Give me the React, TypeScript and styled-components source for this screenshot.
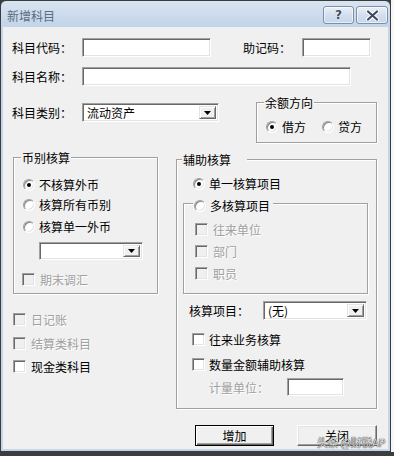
import React from 'react';
import styled, { createGlobalStyle } from 'styled-components';

const GlobalStyle = createGlobalStyle`
  html, body {
    margin: 0;
    padding: 0;
  }
  body {
    background: #3d3d3d;
    font-family: "Noto Sans CJK SC", "Noto Sans", sans-serif;
    overflow: hidden;
  }
`;

const Page = styled.div`
  position: relative;
  display: flex;
  width: 394px;
  height: 456px;
`;

const Window = styled.div`
  width: 391px;
  height: 452px;
  box-sizing: border-box;
  display: flex;
  flex-direction: column;
  padding: 0 2px 2px 2px;
  border: 1px solid #3b3b3b;
  border-radius: 6px 6px 0 0;
  background: linear-gradient(#d9e4f2 0px, #c3d5ea 24px, #c5d6eb 100%);
`;

const SideStrip = styled.div`
  flex: 1;
  height: 452px;
  background: #f6f6f6;
`;

const TitleBar = styled.div`
  height: 26px;
  display: flex;
  justify-content: space-between;
  align-items: flex-start;
  flex-shrink: 0;
`;

const Title = styled.div`
  padding: 8px 0 0 4px;
  font-size: 12px;
  line-height: 14px;
  color: #5c6d83;
`;

const CaptionButtons = styled.div`
  display: flex;
  gap: 2px;
  padding-top: 5px;
`;

const CaptionButton = styled.div<{ $w: number }>`
  width: ${p => p.$w}px;
  height: 18px;
  box-sizing: border-box;
  border: 1px solid #7d8fa6;
  border-radius: 3px;
  background: linear-gradient(#eaf0f8, #d3dfee 50%, #c7d6ea);
  box-shadow: inset 0 0 0 1px rgba(255, 255, 255, 0.6);
  display: flex;
  align-items: center;
  justify-content: center;
  font-family: "DejaVu Sans", sans-serif;
  font-weight: bold;
  font-size: 12px;
  color: #3d4b5e;
  text-shadow: 0 0 1px #fff, 0 0 1px #fff;
`;

const Client = styled.div`
  flex: 1;
  position: relative;
  box-sizing: border-box;
  background: #f0f0f0;
  padding: 11px 0 0 9px;
  display: flex;
  flex-direction: column;
`;

const Row = styled.div<{ $mt?: number; $ml?: number; $align?: string }>`
  display: flex;
  align-items: ${p => p.$align ?? 'center'};
  margin-top: ${p => p.$mt ?? 0}px;
  margin-left: ${p => p.$ml ?? 0}px;
`;

const Column = styled.div<{ $w?: number; $ml?: number; $pt?: number; $pl?: number }>`
  display: flex;
  flex-direction: column;
  align-items: flex-start;
  ${p => (p.$w ? `width: ${p.$w}px;` : '')}
  margin-left: ${p => p.$ml ?? 0}px;
  padding-top: ${p => p.$pt ?? 0}px;
  padding-left: ${p => p.$pl ?? 0}px;
`;

const Label = styled.span<{ $w?: number; $ml?: number; $disabled?: boolean }>`
  ${p => (p.$w ? `width: ${p.$w}px;` : '')}
  margin-left: ${p => p.$ml ?? 0}px;
  flex-shrink: 0;
  font-size: 12px;
  line-height: 13px;
  white-space: nowrap;
  color: ${p => (p.$disabled ? '#a0a0a0' : '#000')};
  ${p => (p.$disabled ? 'text-shadow: 1px 1px 0 #fff;' : '')}
`;

const TextBox = styled.div<{ $w: number; $h?: number; $ml?: number; $mt?: number }>`
  width: ${p => p.$w}px;
  height: ${p => p.$h ?? 19}px;
  margin-left: ${p => p.$ml ?? 0}px;
  margin-top: ${p => p.$mt ?? 0}px;
  box-sizing: border-box;
  flex-shrink: 0;
  background: #fff;
  border: 1px solid;
  border-color: #a0a0a0 #fff #fff #a0a0a0;
  box-shadow: inset 1px 1px 0 #696969, inset -1px -1px 0 #e3e3e3;
`;

const Combo = styled(TextBox)`
  display: flex;
  align-items: center;
  justify-content: space-between;
  padding: 2px;
`;

const ComboText = styled.span`
  padding-left: 2px;
  font-size: 12px;
  line-height: 13px;
  color: #000;
`;

const DropButton = styled.div`
  width: 17px;
  height: 100%;
  box-sizing: border-box;
  background: #f0f0f0;
  border: 1px solid;
  border-color: #e3e3e3 #696969 #696969 #e3e3e3;
  box-shadow: inset 1px 1px 0 #fff, inset -1px -1px 0 #a0a0a0;
  display: flex;
  align-items: center;
  justify-content: center;
`;

const GroupBox = styled.div<{ $w: number; $h: number; $mt?: number; $ml?: number }>`
  position: relative;
  box-sizing: border-box;
  flex-shrink: 0;
  width: ${p => p.$w}px;
  height: ${p => p.$h}px;
  margin-top: ${p => p.$mt ?? 0}px;
  margin-left: ${p => p.$ml ?? 0}px;
  border: 1px solid #a0a0a0;
  box-shadow: 1px 1px 0 #fff, inset 1px 1px 0 #fff;
`;

const Legend = styled.div<{ $left: number; $top?: number; $pr?: number }>`
  position: absolute;
  top: ${p => p.$top ?? -7}px;
  left: ${p => p.$left}px;
  padding: 0 ${p => p.$pr ?? 1}px 0 1px;
  background: #f0f0f0;
  display: flex;
  align-items: center;
  font-size: 12px;
  line-height: 13px;
`;

const Item = styled.div<{ $mt?: number; $ml?: number; $disabled?: boolean }>`
  display: flex;
  align-items: center;
  height: 13px;
  margin-top: ${p => p.$mt ?? 0}px;
  margin-left: ${p => p.$ml ?? 0}px;
  font-size: 12px;
  line-height: 13px;
  white-space: nowrap;
  color: ${p => (p.$disabled ? '#a0a0a0' : '#000')};
  ${p => (p.$disabled ? 'text-shadow: 1px 1px 0 #fff;' : '')}
`;

const RadioDot = styled.span<{ $checked?: boolean }>`
  position: relative;
  width: 12px;
  height: 12px;
  margin-right: 4px;
  box-sizing: border-box;
  border-radius: 50%;
  background: #fff;
  border: 1px solid;
  border-color: #a0a0a0 #fff #fff #a0a0a0;
  box-shadow: inset 1px 1px 0 #8a8a8a, inset -1px -1px 0 #e3e3e3;
  flex-shrink: 0;

  &::after {
    content: '';
    display: ${p => (p.$checked ? 'block' : 'none')};
    position: absolute;
    left: 3px;
    top: 3px;
    width: 4px;
    height: 4px;
    border-radius: 50%;
    background: #000;
  }
`;

const CheckBox = styled.span<{ $disabled?: boolean; $gap?: number }>`
  width: 13px;
  height: 13px;
  margin-right: ${p => p.$gap ?? 5}px;
  box-sizing: border-box;
  flex-shrink: 0;
  background: ${p => (p.$disabled ? '#f0f0f0' : '#fff')};
  border: 1px solid;
  border-color: #a0a0a0 #fff #fff #a0a0a0;
  box-shadow: inset 1px 1px 0 #696969, inset -1px -1px 0 #e3e3e3;
`;

const Button = styled.div<{ $w: number; $ml?: number; $default?: boolean }>`
  width: ${p => p.$w}px;
  height: 21px;
  margin-left: ${p => p.$ml ?? 0}px;
  box-sizing: border-box;
  background: #f0f0f0;
  display: flex;
  align-items: center;
  justify-content: center;
  font-size: 12px;
  color: #000;
  border: 1px solid;
  border-color: ${p => (p.$default ? '#000' : '#fff #696969 #696969 #fff')};
  box-shadow: ${p =>
    p.$default
      ? 'inset 1px 1px 0 #fff, inset -1px -1px 0 #696969, inset -2px -2px 0 #a0a0a0'
      : 'inset -1px -1px 0 #a0a0a0, inset 1px 1px 0 #e3e3e3'};
`;

const Watermark = styled.div`
  position: absolute;
  left: 317px;
  top: 436px;
  font-size: 11px;
  line-height: 13px;
  letter-spacing: -0.3px;
  color: #dcdcdc;
  text-shadow: 0 0 1px #3a3a3a, 0 0 1px #3a3a3a;
  white-space: nowrap;
`;

const Arrow = () => (
  <svg width="7" height="4" viewBox="0 0 7 4">
    <polygon points="0,0 7,0 3.5,4" fill="#000" />
  </svg>
);

const CloseGlyph = () => (
  <svg width="13" height="11" viewBox="0 0 13 11">
    <path d="M2 1.5 L11 9.5 M11 1.5 L2 9.5" stroke="#fff" strokeWidth="4.2" strokeLinecap="round" />
    <path d="M2 1.5 L11 9.5 M11 1.5 L2 9.5" stroke="#3d4b5e" strokeWidth="2.2" strokeLinecap="round" />
  </svg>
);

const Radio: React.FC<{ label: string; checked?: boolean; mt?: number; ml?: number }> = ({ label, checked, mt, ml }) => (
  <Item $mt={mt} $ml={ml}>
    <RadioDot $checked={checked} />
    {label}
  </Item>
);

const Check: React.FC<{ label: string; disabled?: boolean; mt?: number; ml?: number; gap?: number }> = ({
  label,
  disabled,
  mt,
  ml,
  gap,
}) => (
  <Item $mt={mt} $ml={ml} $disabled={disabled}>
    <CheckBox $disabled={disabled} $gap={gap} />
    {label}
  </Item>
);

const App: React.FC = () => {
  return (
    <Page>
      <GlobalStyle />
      <Window>
        <TitleBar>
          <Title>新增科目</Title>
          <CaptionButtons>
            <CaptionButton $w={31}>?</CaptionButton>
            <CaptionButton $w={32}>
              <CloseGlyph />
            </CaptionButton>
          </CaptionButtons>
        </TitleBar>

        <Client>
          <Row>
            <Label $w={70}>科目代码：</Label>
            <TextBox $w={129} />
            <Label $w={59} $ml={32}>助记码：</Label>
            <TextBox $w={69} />
          </Row>

          <Row $mt={10}>
            <Label $w={70}>科目名称：</Label>
            <TextBox $w={269} />
          </Row>

          <Row $mt={16} $align="flex-start">
            <Row $mt={1}>
              <Label $w={70}>科目类别：</Label>
              <Combo $w={137}>
                <ComboText>流动资产</ComboText>
                <DropButton>
                  <Arrow />
                </DropButton>
              </Combo>
            </Row>
            <GroupBox $w={121} $h={41} $ml={37}>
              <Legend $left={7}>余额方向</Legend>
              <Row $mt={17} $ml={9}>
                <Radio label="借方" checked />
                <Radio label="贷方" ml={16} />
              </Row>
            </GroupBox>
          </Row>

          <Row $mt={14} $ml={1} $align="flex-start">
            <Column $w={145}>
              <GroupBox $w={145} $h={137}>
                <Legend $left={7}>币别核算</Legend>
                <Column $pt={20} $pl={9}>
                  <Radio label="不核算外币" checked />
                  <Radio label="核算所有币别" mt={7} />
                  <Radio label="核算单一外币" mt={9} />
                  <Combo $w={104} $h={18} $ml={16} $mt={9}>
                    <span />
                    <DropButton>
                      <Arrow />
                    </DropButton>
                  </Combo>
                  <Check label="期末调汇" disabled mt={13} ml={-1} />
                </Column>
              </GroupBox>
              <Check label="日记账" disabled mt={19} />
              <Check label="结算类科目" disabled mt={11} />
              <Check label="现金类科目" mt={10} />
            </Column>

            <Column $ml={18}>
              <GroupBox $w={201} $h={250} $mt={2}>
                <Legend $left={5} $pr={16}>辅助核算</Legend>
                <Column $pt={17}>
                  <Radio label="单一核算项目" checked ml={16} />
                  <GroupBox $w={185} $h={91} $ml={6} $mt={13}>
                    <Legend $left={9} $top={-5} $pr={3}>
                      <RadioDot />
                      多核算项目
                    </Legend>
                    <Column $pt={19} $pl={11}>
                      <Check label="往来单位" disabled />
                      <Check label="部门" disabled mt={9} />
                      <Check label="职员" disabled mt={9} />
                    </Column>
                  </GroupBox>
                  <Row $mt={7} $ml={12}>
                    <Label $w={74}>核算项目：</Label>
                    <Combo $w={104}>
                      <ComboText>(无)</ComboText>
                      <DropButton>
                        <Arrow />
                      </DropButton>
                    </Combo>
                  </Row>
                  <Check label="往来业务核算" mt={13} ml={15} gap={4} />
                  <Check label="数量金额辅助核算" mt={12} ml={15} gap={4} />
                  <Row $mt={7} $ml={32}>
                    <Label $w={78} $disabled>计量单位：</Label>
                    <TextBox $w={57} $h={18} />
                  </Row>
                </Column>
              </GroupBox>
            </Column>
          </Row>

          <Row $mt={16} $ml={183}>
            <Button $w={79} $default>增加</Button>
            <Button $w={80} $ml={23}>关闭</Button>
          </Row>
        </Client>
      </Window>
      <SideStrip />
      <Watermark>头条 @财税AP</Watermark>
    </Page>
  );
};

export default App;
